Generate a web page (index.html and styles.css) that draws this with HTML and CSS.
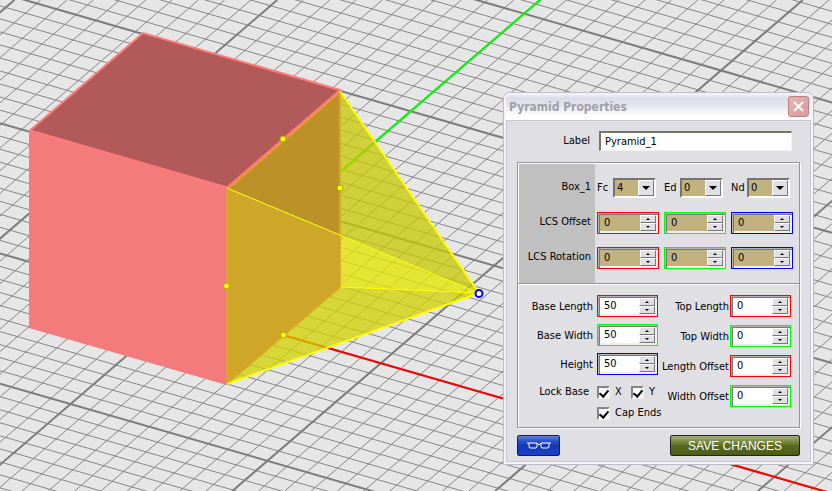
FILE: index.html
```html
<!DOCTYPE html>
<html lang="en">
<head>
<meta charset="utf-8">
<title>Pyramid Properties</title>
<link rel="stylesheet" href="styles.css">
</head>
<body>
<main class="viewport">
  <svg class="scene" viewBox="0 0 832 491" preserveAspectRatio="xMinYMin slice" role="img" aria-label="3D view">
    <path id="grid-minor" class="grid-minor"/>
    <path id="grid-major" class="grid-major"/>
    <path class="axis axis-x" d="M283 335 L832 493.5"/>
    <path class="axis axis-y" d="M341 171.3 L540.5 -0.5"/>
    <!-- pyramid -->
    <path class="pyr-back" d="M340 91 L479 293 L340 235.5Z"/>
    <path class="pyr-mid" d="M340 235.5 L479 293 L340 287Z"/>
    <path class="pyr-low" d="M340 287 L479 293 L227 383Z"/>
    <!-- box -->
    <path class="box-top" d="M30 130.5 L143 33 L340 90 L227 188Z"/>
    <path class="box-front" d="M29 130.5 L227 188 L227 385 L29 328Z"/>
    <path class="face-upper" d="M227 188 L340 91 L340 235.5Z"/>
    <path class="face-lower" d="M227 188 L340 235.5 L340 287 L227 384Z"/>
    <path class="face-edge" d="M227.500 383 V188.500 M340 91 V287 L228 383"/>
    <path class="face-rim" d="M227.500 189.500 L340 92"/>
    <path class="box-edge" d="M30 130.5 L143 33 L340 90 L227 187.5 L30 130.5"/>
    <path class="pyr-edge" d="M340 91 L479 293 L227 384"/>
    <path class="pyr-thin" d="M227 188 L479 293 L340 287"/>
    <g class="handles">
      <circle cx="283" cy="139" r="3"/><circle cx="340" cy="188" r="3"/>
      <circle cx="226.500" cy="286" r="3"/><circle cx="283.500" cy="335" r="3"/>
    </g>
    <circle class="apex" cx="479" cy="293.500" r="3.500"/>
  </svg>

  <section class="window" role="dialog" aria-labelledby="win-title">
    <header class="titlebar">
      <h1 id="win-title">Pyramid Properties</h1>
      <button class="close" type="button" aria-label="Close"><svg viewBox="0 0 11 11"><path d="M1 1 10 10M10 1 1 10"/></svg></button>
    </header>
    <form class="body">
      <div class="name-row">
        <label for="name">Label</label>
        <input id="name" class="text" type="text" value="Pyramid_1">
      </div>
      <div class="panel">
        <div class="snap">
          <div class="side">
            <span>Box_1</span><span>LCS Offset</span><span>LCS Rotation</span>
          </div>
          <div class="snap-fields">
            <div class="pick"><label for="fc">Fc</label><span class="drop"><select id="fc"><option>4</option></select><i></i></span></div>
            <div class="pick"><label for="ed">Ed</label><span class="drop"><select id="ed"><option>0</option></select><i></i></span></div>
            <div class="pick"><label for="nd">Nd</label><span class="drop"><select id="nd"><option>0</option></select><i></i></span></div>
            <div class="spin red tan"><input type="number" value="0" aria-label="LCS Offset X"><span class="steps"><button type="button" class="up" aria-label="Increase"></button><button type="button" class="down" aria-label="Decrease"></button></span></div>
            <div class="spin green tan"><input type="number" value="0" aria-label="LCS Offset Y"><span class="steps"><button type="button" class="up" aria-label="Increase"></button><button type="button" class="down" aria-label="Decrease"></button></span></div>
            <div class="spin blue tan"><input type="number" value="0" aria-label="LCS Offset Z"><span class="steps"><button type="button" class="up" aria-label="Increase"></button><button type="button" class="down" aria-label="Decrease"></button></span></div>
            <div class="spin red tan"><input type="number" value="0" aria-label="LCS Rotation X"><span class="steps"><button type="button" class="up" aria-label="Increase"></button><button type="button" class="down" aria-label="Decrease"></button></span></div>
            <div class="spin green tan"><input type="number" value="0" aria-label="LCS Rotation Y"><span class="steps"><button type="button" class="up" aria-label="Increase"></button><button type="button" class="down" aria-label="Decrease"></button></span></div>
            <div class="spin blue tan"><input type="number" value="0" aria-label="LCS Rotation Z"><span class="steps"><button type="button" class="up" aria-label="Increase"></button><button type="button" class="down" aria-label="Decrease"></button></span></div>
          </div>
        </div>
        <div class="dims">
          <div class="col base">
            <label for="bl">Base Length</label>
            <div class="spin red"><input id="bl" type="number" value="50"><span class="steps"><button type="button" class="up" aria-label="Increase"></button><button type="button" class="down" aria-label="Decrease"></button></span></div>
            <label for="bw">Base Width</label>
            <div class="spin green"><input id="bw" type="number" value="50"><span class="steps"><button type="button" class="up" aria-label="Increase"></button><button type="button" class="down" aria-label="Decrease"></button></span></div>
            <label for="ht">Height</label>
            <div class="spin blue"><input id="ht" type="number" value="50"><span class="steps"><button type="button" class="up" aria-label="Increase"></button><button type="button" class="down" aria-label="Decrease"></button></span></div>
            <span class="lock">Lock Base</span>
            <div class="checks">
              <label><input type="checkbox" checked>X</label>
              <label><input type="checkbox" checked>Y</label>
              <label class="cap"><input type="checkbox" checked>Cap Ends</label>
            </div>
          </div>
          <div class="col top">
            <label for="tl">Top Length</label>
            <div class="spin red"><input id="tl" type="number" value="0"><span class="steps"><button type="button" class="up" aria-label="Increase"></button><button type="button" class="down" aria-label="Decrease"></button></span></div>
            <label for="tw">Top Width</label>
            <div class="spin green"><input id="tw" type="number" value="0"><span class="steps"><button type="button" class="up" aria-label="Increase"></button><button type="button" class="down" aria-label="Decrease"></button></span></div>
            <label for="lo">Length Offset</label>
            <div class="spin red"><input id="lo" type="number" value="0"><span class="steps"><button type="button" class="up" aria-label="Increase"></button><button type="button" class="down" aria-label="Decrease"></button></span></div>
            <label for="wo">Width Offset</label>
            <div class="spin green"><input id="wo" type="number" value="0"><span class="steps"><button type="button" class="up" aria-label="Increase"></button><button type="button" class="down" aria-label="Decrease"></button></span></div>
          </div>
        </div>
      </div>
      <footer class="actions">
        <button class="view" type="button" aria-label="Preview"><svg viewBox="0 0 24 9"><path d="M0 2H10L12 4L14 2H24M2 2V6L3 7H9L10 6V2M14 2V6L15 7H21L22 6V2"/></svg></button>
        <button class="save" type="button">SAVE CHANGES</button>
      </footer>
    </form>
  </section>
</main>
<script src="grid.js"></script>
</body>
</html>
```
FILE: grid.js
```js
// Ground grid: two families of parallel lines, a heavy line every 10 units.
const W = 832, H = 491;
const axisX = { slope: 0.2885, y0: 253.4, step: 13.03 };
const axisY = { slope: 0.8606, x0: 540, step: 26.28 };
let minor = '', major = '';
for (let k = -60; k <= 60; k++) {
  const y = axisX.y0 + k * axisX.step;
  const a = `M0 ${y.toFixed(1)}L${W} ${(y + W * axisX.slope).toFixed(1)}`;
  const x = axisY.x0 + k * axisY.step;
  const b = `M${x.toFixed(1)} 0L${(x - H / axisY.slope).toFixed(1)} ${H}`;
  if (k % 10 === 0) major += a + b; else minor += a + b;
}
document.getElementById('grid-minor').setAttribute('d', minor);
document.getElementById('grid-major').setAttribute('d', major);
```
FILE: styles.css
```css
* { box-sizing: border-box; }
body {
  margin: 0;
  font: 11px/14px "DejaVu Sans Condensed", "DejaVu Sans", sans-serif;
  color: #000;
}
button, input, select { font: inherit; color: inherit; margin: 0; padding: 0; }
.viewport { position: relative; height: 100vh; min-height: 480px; overflow: hidden; background: #e6e6e6; }

.scene { display: block; width: 100%; height: 100%; fill: none; }
.grid-minor { stroke: #868686; stroke-width: 1; }
.grid-major { stroke: #7c7c7c; stroke-width: 2; }
.axis { stroke-width: 2; }
.axis-x { stroke: #f00; }
.axis-y { stroke: #0f0; }
.pyr-back { fill: #c8c800; fill-opacity: .75; }
.pyr-mid { fill: #e4e400; fill-opacity: .78; }
.pyr-low { fill: #d1d100; fill-opacity: .75; }
.box-top { fill: #b25a5a; }
.box-front { fill: #f37b7b; }
.face-upper { fill: #bc9228; }
.face-lower { fill: #cfa728; }
.box-edge { stroke: #ff7b7b; stroke-width: 2; }
.face-edge { stroke: #d9a824; stroke-width: 2; }
.face-rim { stroke: #eb9a2c; stroke-width: 2; }
.pyr-edge { stroke: #ff0; stroke-width: 2; }
.pyr-thin { stroke: #ff0; stroke-width: 1; }
.handles { fill: #ff0; stroke: #a8a800; stroke-width: 1; }
.apex { fill: #fff; stroke: #00e; stroke-width: 2; }

.window {
  position: absolute; top: 92px; right: 18px; width: 311px;
  padding: 0 2px 2px;
  background: #f4f4f9;
  border: 1px solid #bcbccd;
  border-radius: 7px 7px 0 0;
}
.titlebar {
  display: flex; align-items: center; justify-content: space-between;
  height: 27px; padding: 0 2px 0 3px;
  background: linear-gradient(#f5f5fa 0, #dcdce8 20%, #e4e4ee 45%, #fff 85%);
  border-radius: 6px 6px 0 0;
}
.titlebar h1 { margin: 0; font-size: 12px; line-height: 16px; color: #a0a0a4; }
.close {
  display: grid; place-items: center; width: 21px; height: 21px;
  border: 1px solid #b88088; border-radius: 3px;
  background: linear-gradient(135deg, #e8b4b4, #d99a9a);
}
.close svg { width: 11px; height: 11px; stroke: #fff; stroke-width: 2; }
.body { padding: 10px 10px 5px; background: #e0dfe3; border: 1px solid #c6c6d6; }

.name-row { display: flex; align-items: center; justify-content: flex-end; gap: 9px; padding-right: 8px; }
.text {
  width: 193px; height: 20px; padding-left: 4px; background: #fff;
  border: 1px solid; border-width: 2px 1px 1px 2px;
  border-color: #75776a #f4f4ee #f4f4ee #75776a;
}
.panel { margin-top: 11px; border: 1px solid #949494; box-shadow: inset 1px 1px #fff, 1px 1px #fff; }
.snap { display: flex; height: 121px; padding: 1px 0 0 1px; border-bottom: 1px solid #949494; box-shadow: 0 1px #fff; }
.side { display: flex; flex-direction: column; gap: 13px; width: 76px; padding: 13px 4px 0 0; background: #c0c0c0; text-align: right; }
.side span { height: 22px; line-height: 20px; }
.snap-fields {
  flex: 1; display: grid; grid-template-columns: repeat(3, 62px);
  grid-auto-rows: 22px; column-gap: 5px; row-gap: 13px; padding: 13px 0 0 2px;
}
.pick { display: flex; align-items: center; justify-content: space-between; padding-right: 3px; }
.drop { position: relative; display: block; width: 43px; height: 20px; }
.drop select {
  width: 100%; height: 100%; padding-left: 2px; appearance: none; border-radius: 0;
  background: #c2b280; border: 2px solid; border-color: #76746e #fff #fff #76746e; outline: 0;
}
.drop i {
  position: absolute; top: 2px; right: 2px; width: 16px; height: 16px; pointer-events: none;
  background: #e0dfe3; border: 1px solid; border-color: #fff #77757e #77757e #fff;
}
.drop i::after {
  content: ""; position: absolute; top: 5px; left: 3px;
  border: 4px solid transparent; border-top-color: #000; border-bottom: 0;
}

.spin { display: flex; height: 22px; padding: 2px; border: 1px solid; background: #efefed; box-shadow: inset 1px 1px #b4b3b0, inset 2px 2px #77757e; }
.spin.red { border-color: #f00; }
.spin.green { border-color: #0f0; }
.spin.blue { border-color: #00f; }
.spin input {
  flex: 1; min-width: 0; padding-left: 4px; border: 0; background: #fff; appearance: textfield;
}
.spin input::-webkit-inner-spin-button { display: none; }
.spin.tan input { background: #c2b280; }
.steps { display: flex; flex-direction: column; width: 16px; }
.steps button {
  flex: 1; display: grid; place-items: center; background: #e0dfe3;
  border: 1px solid; border-color: #fff #77757e #77757e #fff;
}
.steps button::after { content: ""; border: 2px solid transparent; }
.steps .up::after { border-bottom-color: #000; border-top: 0; }
.steps .down::after { border-top-color: #000; border-bottom: 0; }

.dims { display: flex; justify-content: space-between; padding: 11px 8px 6px 2px; }
.col { display: grid; align-content: start; text-align: right; }
.col > label { line-height: 24px; }
.base { grid-template-columns: 73px 61px; grid-template-rows: 22px 22px 22px auto; gap: 7px 4px; }
.top { grid-template-columns: 70px 61px; grid-auto-rows: 22px; gap: 8px 1px; }
.lock { padding-right: 4px; line-height: 20px; }
.checks { display: grid; grid-template-columns: 34px 34px; grid-auto-rows: 16px; row-gap: 5px; padding-top: 2px; }
.checks label { display: flex; align-items: center; gap: 5px; white-space: nowrap; }
.checks .cap { grid-column: 1 / 3; }
.checks input {
  position: relative; flex: none; width: 13px; height: 13px; appearance: none; background: #fff;
  border: 2px solid; border-color: #85838c #f4f4ee #f4f4ee #85838c;
}
.checks input:checked::after {
  content: ""; position: absolute; left: 2px; top: 0; width: 4px; height: 7px;
  border: solid #000; border-width: 0 2px 2px 0; transform: rotate(40deg);
}

.actions { display: flex; justify-content: space-between; padding-top: 7px; }
.actions button { height: 21px; border: 1px solid #222; border-radius: 2px; color: #fff; }
.view { display: grid; place-items: center; width: 43px; background: linear-gradient(#5f83d6 0, #2c55c6 25%, #1638b4 50%, #1741cf); }
.view svg { width: 24px; height: 9px; fill: none; stroke: #fff; stroke-width: 1; }
.actions .save {
  width: 130px; background: linear-gradient(#a3ae74 0, #7b8a42 30%, #5a6a1e 50%, #4c5c15);
  font: 12px/14px "Liberation Sans", Arial, sans-serif;
}
```
